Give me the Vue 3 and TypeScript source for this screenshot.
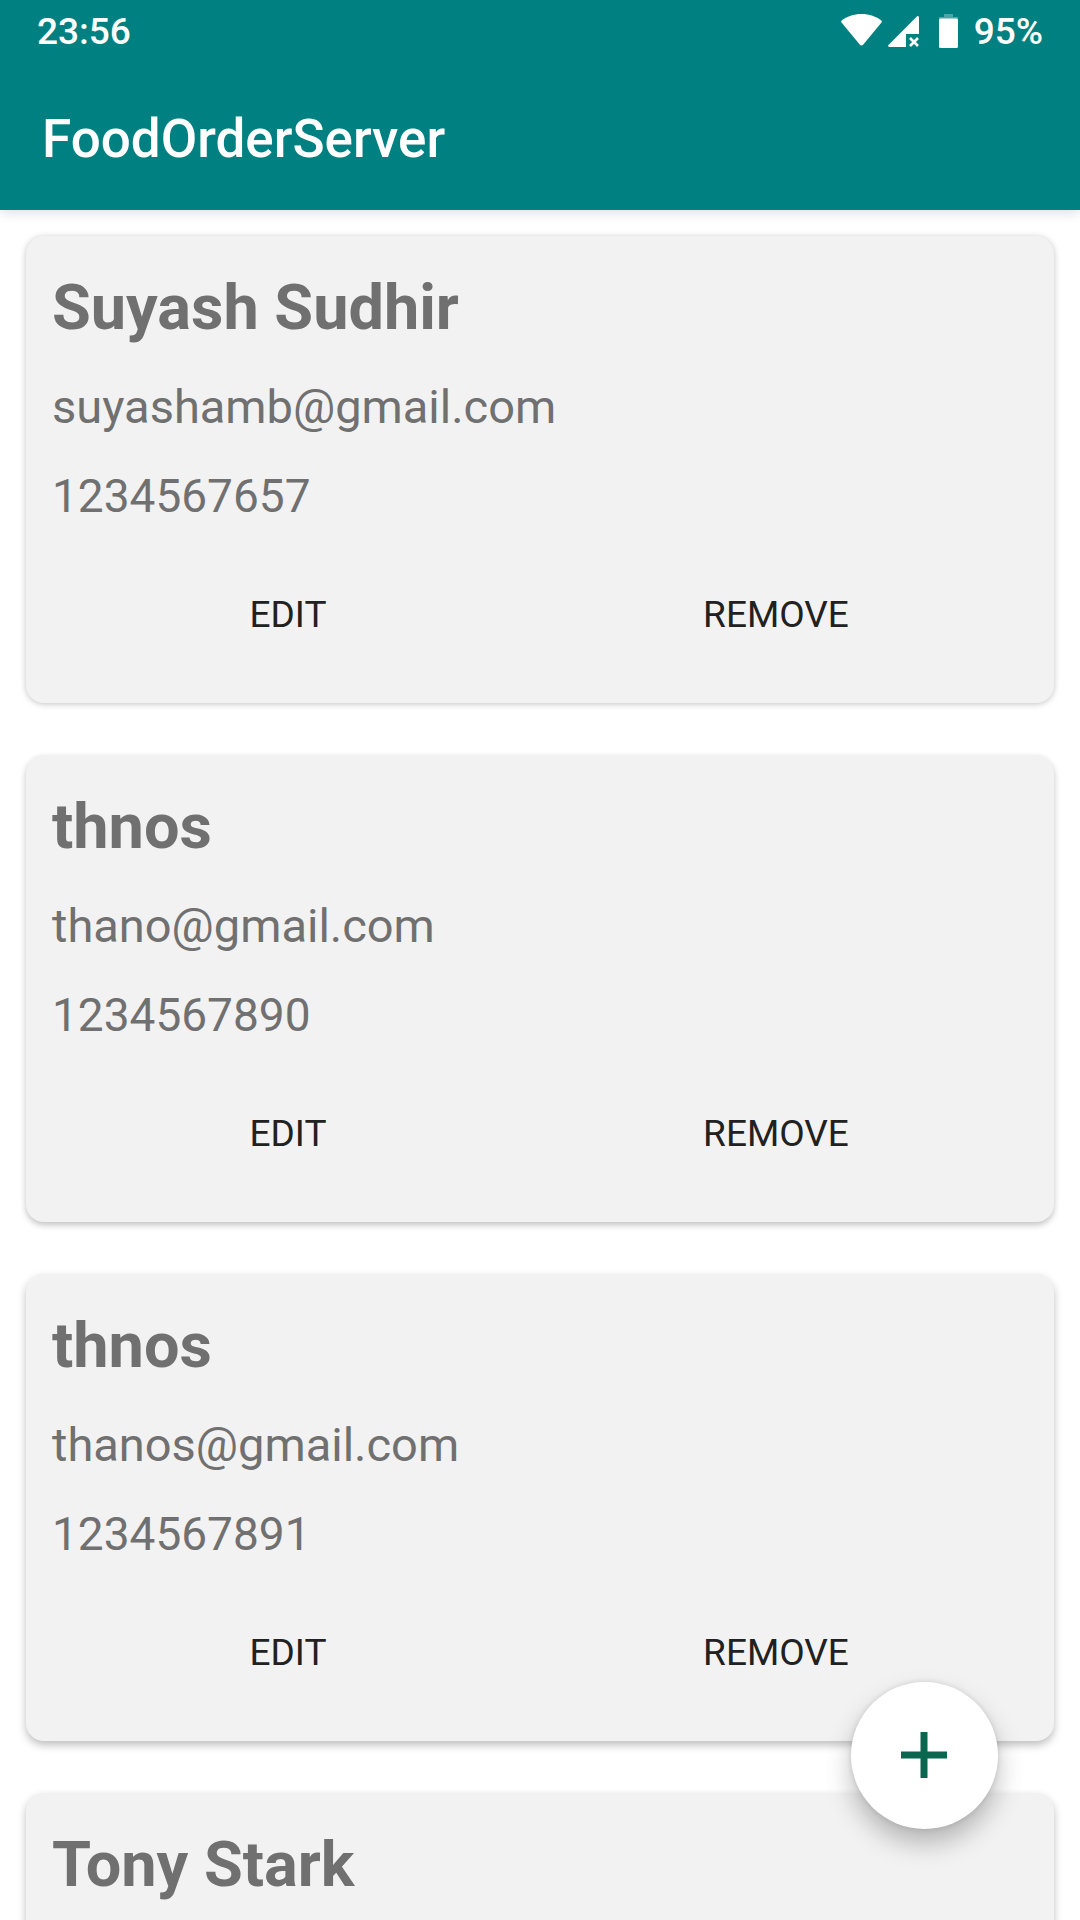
<script setup lang="ts">
interface Customer {
  id: number
  name: string
  email?: string
  phone?: string
}

const customers: Customer[] = [
  { id: 1, name: 'Suyash Sudhir', email: 'suyashamb@gmail.com', phone: '1234567657' },
  { id: 2, name: 'thnos', email: 'thano@gmail.com', phone: '1234567890' },
  { id: 3, name: 'thnos', email: 'thanos@gmail.com', phone: '1234567891' },
  { id: 4, name: 'Tony Stark' },
]
</script>

<template>
  <div class="app">
    <header class="top">
      <div class="status">
        <span>23:56</span>
        <div class="indicators">
          <svg class="wifi" width="41" height="34" viewBox="0 0 41 34" aria-hidden="true">
            <path d="M20.500 0C12.700 0 5.700 2.500 .700 6.500Q-.300 7.500 .500 8.600L18.700 30.500Q20.500 32.500 22.300 30.500L40.500 8.600Q41.300 7.500 40.300 6.500C35.300 2.500 28.300 0 20.500 0Z" fill="#fff" />
          </svg>
          <svg class="signal" width="31" height="34" viewBox="0 0 31 34" aria-hidden="true">
            <path d="M31 3.500V20H18V33H1.200Q-.600 32.500 .500 31L28.800 2.500Q30.500 1.300 31 3.500Z" fill="#fff" />
            <path d="M22 24L30 32M30 24L22 32" stroke="#fff" stroke-width="2.600" />
          </svg>
          <svg class="battery" width="19" height="34" viewBox="0 0 19 34" aria-hidden="true">
            <path d="M5 0H14V3H19V5H0V3H5Z" fill="#fff" fill-opacity=".3" />
            <rect y="4.500" width="19" height="29.500" rx="1.500" fill="#fff" />
          </svg>
          <span>95%</span>
        </div>
      </div>
      <h1 class="title">FoodOrderServer</h1>
    </header>

    <main class="list">
      <article v-for="c in customers" :key="c.id" class="card">
        <h2 class="name">{{ c.name }}</h2>
        <div v-if="c.email" class="details">
          <p>{{ c.email }}</p>
          <p class="phone">{{ c.phone }}</p>
        </div>
        <div v-if="c.email" class="actions">
          <button type="button">EDIT</button>
          <button type="button">REMOVE</button>
        </div>
      </article>
    </main>

    <button type="button" class="fab" aria-label="Add">
      <svg width="46" height="46" viewBox="0 0 46 46" aria-hidden="true">
        <path d="M23 0V46M0 23H46" stroke="#0b6650" stroke-width="7" />
      </svg>
    </button>
  </div>
</template>

<style>
body {
  margin: 0;
  background: #fff;
}
</style>

<style scoped>
.app {
  display: flex;
  flex-direction: column;
  height: 100vh;
  overflow: hidden;
  font-family: Roboto, "Liberation Sans", sans-serif;
}

.top {
  position: relative;
  z-index: 1;
  flex: none;
  background: #008080;
  color: #fff;
  box-shadow: 0 2px 12px rgba(0, 0, 0, 0.14);
}

.status {
  display: flex;
  align-items: center;
  justify-content: space-between;
  height: 62px;
  padding: 0 37px;
  font-size: 37px;
  font-weight: 500;
}

.indicators {
  display: flex;
  align-items: center;
}

.wifi {
  margin-right: 6px;
}

.signal {
  margin-right: 20px;
}

.battery {
  margin-right: 16px;
}

.title {
  margin: 0;
  padding: 6px 42px 0;
  font-size: 53px;
  font-weight: 500;
  line-height: 142px;
}

.list {
  display: flex;
  flex: 1;
  flex-direction: column;
  gap: 52px;
  min-height: 0;
  padding: 26px;
  overflow: hidden;
}

.card {
  display: flex;
  flex: none;
  flex-direction: column;
  gap: 9px;
  box-sizing: border-box;
  min-height: 467px;
  padding: 27px 26px 24px;
  border-radius: 18px;
  background: #f2f2f2;
  color: #707070;
  box-shadow: 0 1px 6px rgba(0, 0, 0, 0.24);
}

.card:nth-child(2) {
  box-shadow: 0 3px 6px rgba(0, 0, 0, 0.24);
}

.card:nth-child(n + 3) {
  box-shadow: 0 4px 8px rgba(0, 0, 0, 0.26);
}

.name {
  margin: 0;
  font-size: 63px;
  font-weight: 700;
  line-height: 90px;
}

.details p {
  margin: 0;
  font-size: 47px;
  line-height: 90px;
}

.details .phone {
  font-size: 46px;
  line-height: 88px;
}

.actions {
  display: flex;
}

.actions button {
  flex: 1 1 0;
  height: 130px;
  margin: 0 16px 0 0;
  padding: 0;
  border: 0;
  background: none;
  color: #212121;
  font-family: inherit;
  font-size: 37px;
}

.fab {
  position: fixed;
  right: 82px;
  bottom: 91px;
  z-index: 2;
  display: flex;
  align-items: center;
  justify-content: center;
  width: 147px;
  height: 147px;
  padding: 0 1px 1px 0;
  border: 0;
  border-radius: 50%;
  background: #fff;
  box-shadow: 0 14px 26px rgba(0, 0, 0, 0.26), 0 0 6px rgba(0, 0, 0, 0.12);
}
</style>
